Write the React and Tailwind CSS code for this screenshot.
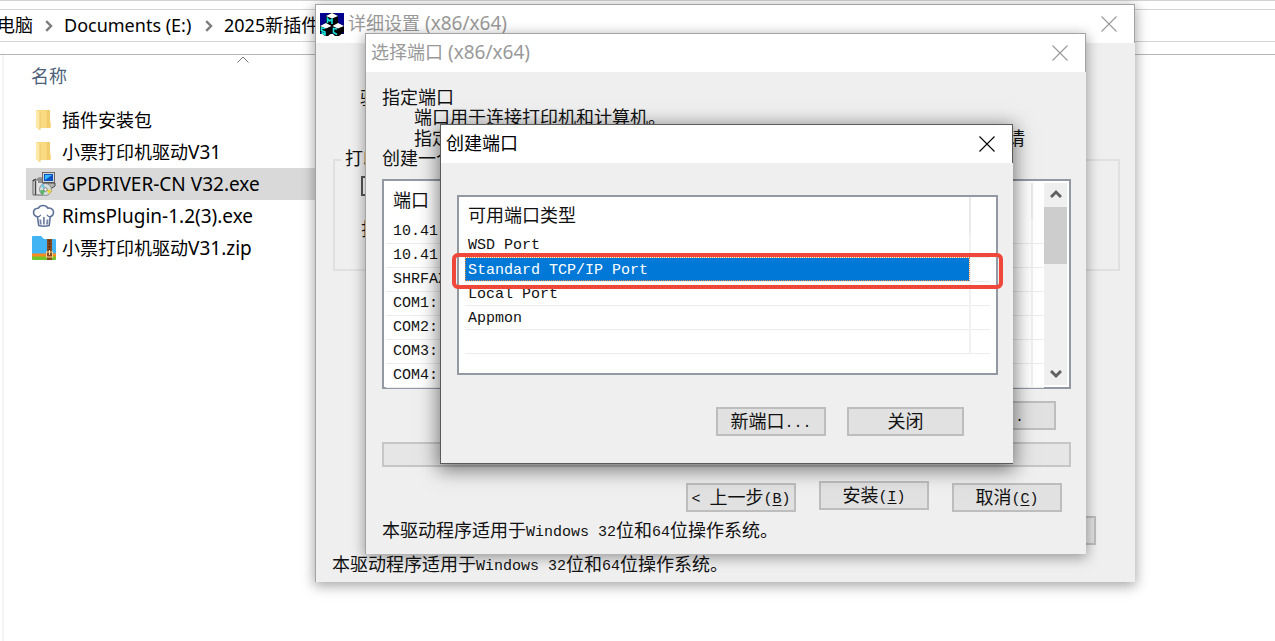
import React from "react";

const ui = "font-['Open_Sans','Noto_Sans_CJK_SC',sans-serif]";
const song = "font-['Liberation_Mono','Noto_Sans_CJK_SC',monospace]";

/* Dialog text: full-width glyphs at 18px, Latin runs on a 9px grid. */
function Song({ children }) {
  return String(children)
    .split(/([ -~]+)/)
    .filter(Boolean)
    .map((part, i) =>
      /^[ -~]+$/.test(part) ? (
        <span key={i} className="text-[15px] leading-4 align-[1px] whitespace-pre">{part}</span>
      ) : (
        <span key={i}>{part}</span>
      )
    );
}

/* Explorer and title text: Latin runs get their own face and size. */
function Label({ large, children }) {
  return String(children)
    .split(/([ -~]+)/)
    .filter(Boolean)
    .map((part, i) =>
      /^[ -~]+$/.test(part) ? (
        <span key={i} className={`${large ? "text-[19px]" : "text-[18px]"} leading-6 font-['Noto_Sans',sans-serif] whitespace-pre`}>{part}</span>
      ) : (
        <span key={i}>{part}</span>
      )
    );
}

function Chevron() {
  return (
    <svg width="8" height="12" viewBox="0 0 8 12" fill="none" stroke="#7c7c7c" strokeWidth="2.4" aria-hidden="true">
      <path d="M1.2 1.2 6 6 1.2 10.8" />
    </svg>
  );
}

function FolderIcon() {
  return (
    <svg width="24" height="24" viewBox="0 0 24 24" aria-hidden="true">
      <path d="M4 2h14v12h.5v6H8L4 16z" fill="#f9da80" />
      <path d="M14.500 2H18v12h.5v6h-4z" fill="#f3cd6c" />
      <path d="M4 2l4 2v18.500l-4-3z" fill="#ffe9a6" />
      <path d="M8 4v18" stroke="#ecc96c" strokeWidth="1" />
    </svg>
  );
}

function InstallerIcon() {
  return (
    <svg width="24" height="24" viewBox="0 0 24 24" aria-hidden="true">
      <path d="M1 8h5V6h5v17H1z" fill="#e4e4e4" stroke="#666" />
      <path d="M3.500 9v14M1 9l3-2" stroke="#444" strokeWidth="1.400" />
      <path d="M6 6h5v5H6z" fill="#8f8f8f" />
      <rect x="10.500" y=".5" width="12" height="10" fill="#d5d8da" stroke="#666" />
      <rect x="12" y="2" width="9" height="7" fill="#0b51c5" />
      <path d="M13 3h7l-7 5z" fill="#35baff" />
      <path d="M12 11h11v3l-3 2h-8z" fill="#b3b5b5" stroke="#444" />
      <circle cx="13.500" cy="17.500" r="6" fill="#d5ddd9" stroke="#777" strokeWidth=".8" />
      <path d="M13.500 17.500 8.500 14a6 6 0 0 1 3-2z" fill="#6fc5e5" />
      <path d="m13.500 17.500 4 4.500a6 6 0 0 0 2-4z" fill="#e8d53d" />
      <path d="m13.500 17.500-5.500 1a6 6 0 0 0 3 4.500z" fill="#55b76a" />
      <circle cx="13.500" cy="17.500" r="1.700" fill="#fff" stroke="#555" strokeWidth=".7" />
    </svg>
  );
}

function ChefIcon() {
  return (
    <svg width="24" height="24" viewBox="0 0 24 24" fill="#fff" stroke="#5d7098" strokeWidth="1.600" strokeLinejoin="round" aria-hidden="true">
      <path d="M5.500 12.800A4.300 4.300 0 1 1 6.200 4.200 5.800 5.800 0 0 1 16 4.200a4.300 4.300 0 1 1 2.200 8.600L17.200 21.500q-5.600 1.500-10.500 0z" />
      <path d="m8.800 20.500-.5-5M11.900 20.500V13M15 20.500l.5-5" stroke="#7786a8" strokeWidth="1.800" />
      <path d="M5.600 12.800q2.400-.2 3.200-2M18.200 12.800q-2.400-.2-3.200-2" fill="none" strokeWidth="1.200" />
    </svg>
  );
}

function ZipIcon() {
  return (
    <svg width="24" height="24" viewBox="0 0 24 24" aria-hidden="true">
      <path d="M0 1q0-1 1-1h8l3 3h11q1 0 1 1v14H0z" fill="#43b4f3" />
      <path d="M0 17.500h24V21H0z" fill="#fb8b1e" />
      <path d="M0 20.500h24V23q0 1-1 1H1q-1 0-1-1z" fill="#71c52c" />
      <path d="M15 3h5v21h-5z" fill="#8a4a20" />
      <path d="M17.500 4v11" stroke="#4b2814" strokeWidth="1.600" strokeDasharray="1.500 1.500" />
      <rect x="14.500" y="16" width="6" height="5" fill="#8a4a20" stroke="#ffd38a" />
      <path d="M17.500 14v5" stroke="#ffe2a8" />
    </svg>
  );
}

/* Three lettered cubes stacked on a navy field. */
function MfcIcon() {
  return (
    <svg width="24" height="23" viewBox="0 0 24 23" aria-hidden="true">
      <path d="M0 0h24v21H0z" fill="#00008c" />
      <path d="M6 3v7l-6 3v6l5 4h3l4-3 3 3h4l5-4v-6l-6-3V3l-5-3h-2z" fill="#000" />
      <path d="m6 3 6-3 6 3-6 2.500zM0 13l6-3 5.500 3L6 15.500zM12.500 13l5.500-3 6 3-6 2.500z" fill="#fff" />
      <path d="M7.500 10V5.500l2 2.500L12 6.500V11M5 15.500l-3.500-.5v2.500L5 19v2.500l-3.500-2M17 16l-3.500-.5v4l3.500 2" stroke="#17e3df" strokeWidth="1.600" fill="none" />
    </svg>
  );
}

function Win({ title, icon, active, place, children }) {
  return (
    <section
      aria-label={title}
      className={`absolute flex flex-col border-t border-l bg-[#efefef] ${
        active
          ? "border-[#5a5a5a] border-b shadow-[0_4px_18px_2px_rgba(0,0,0,0.5)]"
          : "border-[#a3a3a3] shadow-[0_3px_12px_1px_rgba(0,0,0,0.35)]"
      } ${place}`}
    >
      <header
        className={`flex h-[38px] shrink-0 items-center gap-1 border-r bg-white pr-4 text-[18px] ${icon ? "pl-1" : "pl-[5px]"} ${ui} ${
          active ? "border-[#5a5a5a] text-black" : "border-[#a3a3a3] text-[#999]"
        }`}
      >
        {icon}
        <h2 className="flex-1 pb-0.5 leading-6 whitespace-nowrap"><Label large>{title}</Label></h2>
        <button type="button" aria-label={`关闭 ${title}`} className="p-px">
          <svg width="16" height="16" viewBox="0 0 16 16" stroke="currentColor" strokeWidth="1.100" aria-hidden="true">
            <path d="m.5.5 15 15m0-15-15 15" />
          </svg>
        </button>
      </header>
      <div className={`flex min-h-0 flex-1 flex-col text-[18px] leading-5 text-[#111] ${song}`}>{children}</div>
    </section>
  );
}

function Btn({ className = "", children }) {
  return (
    <button
      type="button"
      className={`flex h-[29px] shrink-0 items-center justify-center whitespace-pre border-2 border-[#bdbdbd] bg-[#e1e1e1] pt-0.5 ${className}`}
    >
      {children}
    </button>
  );
}

function Key({ text, k }) {
  return (
    <span>
      <Song>{text}</Song>
      <span className="text-[15px] leading-4 align-[1px]">(<u className="underline-offset-2">{k}</u>)</span>
    </span>
  );
}

const files = [
  { name: "插件安装包", Icon: FolderIcon },
  { name: "小票打印机驱动V31", Icon: FolderIcon },
  { name: "GPDRIVER-CN V32.exe", Icon: InstallerIcon, selected: true },
  { name: "RimsPlugin-1.2(3).exe", Icon: ChefIcon },
  { name: "小票打印机驱动V31.zip", Icon: ZipIcon },
];

const ports = ["10.41.", "10.41.", "SHRFAX:", "COM1:", "COM2:", "COM3:", "COM4:"];
const portTypes = ["WSD Port", "Standard TCP/IP Port", "Local Port", "Appmon", ""];
const footer = "本驱动程序适用于Windows 32位和64位操作系统。";

export default function App() {
  return (
    <div className="relative min-h-screen overflow-hidden bg-white text-black">
      <main className={`flex min-h-screen flex-col text-[18px] ${ui}`}>
        <div className="h-2.5 border-t border-b border-[#d3d3d3]" />
        <nav aria-label="路径" className="flex h-8 items-center border-b border-[#d3d3d3] whitespace-nowrap">
          <a href="#pc" className="flex w-[33px] justify-end overflow-hidden"><span className="shrink-0">此电脑</span></a>
          <span className="flex w-[31px] justify-center"><Chevron /></span>
          <a href="#documents" className="w-[129px]"><Label>Documents (E:)</Label></a>
          <span className="flex w-[31px] justify-center"><Chevron /></span>
          <a href="#plugins"><Label>2025新插件</Label></a>
        </nav>
        <div className="h-[13px] border-b border-[#b5b5b5]" />
        <div className="ml-0.5 flex-1 border-l-2 border-[#f4f4f4]">
          <div className="flex h-[49px] items-start pl-[27px] text-[#4c607a]">
            <span className="w-[206px] pt-2">名称</span>
            <svg width="12" height="7" viewBox="0 0 12 7" fill="none" stroke="#777" className="mt-px" aria-hidden="true">
              <path d="M.5 6.500 6 1l5.500 5.500" />
            </svg>
          </div>
          <ul className="pl-[22px]">
            {files.map(({ name, Icon, selected }) => (
              <li key={name} className={`flex h-8 w-[320px] items-center gap-1.5 pl-1.5 whitespace-nowrap ${selected ? "bg-[#d9d9d9]" : ""}`}>
                <Icon />
                <span className="leading-6"><Label large>{name}</Label></span>
              </li>
            ))}
          </ul>
        </div>
      </main>

      <Win title="详细设置 (x86/x64)" icon={<MfcIcon />} place="left-[315px] top-[4px] h-[578px] w-[820px]">
        <p className="mt-[47px] pl-11">驱动程序</p>
        <fieldset className="mt-10 mr-[15px] ml-[17px] h-[121px] border-2 border-[#e0e0e0] pl-[26px]">
          <legend className="-ml-5 px-1">打印机</legend>
          <input type="checkbox" defaultChecked aria-label="打印机" className="mt-1.5 block size-5 appearance-none border-2 border-[#555] bg-white" />
          <p className="mt-[25px]">打印机</p>
        </fieldset>
        <div className="mt-auto flex justify-end pr-[39px]">
          <Btn className="w-[110px]">关闭</Btn>
        </div>
        <p className="mt-[11px] mb-1.5 pl-4"><Song>{footer}</Song></p>
      </Win>

      <Win title="选择端口 (x86/x64)" place="left-[365px] top-[33px] h-[521px] w-[721px]">
        <div className="flex flex-1 flex-col pt-[17px] pr-[15px] pl-4">
          <p>指定端口</p>
          <p className="pl-8">端口用于连接打印机和计算机。</p>
          <p className="flex w-[643px] justify-between pt-px pl-8"><span>指定</span><span>请</span></p>
          <p>创建一个</p>
          <div className="mt-[9px] flex h-[210px] border-2 border-[#9299a3] bg-white p-0.5">
            <table className="flex-1 self-start border-collapse">
              <thead>
                <tr className="h-9">
                  <th className="border-r-2 border-[#e9e9e9] pt-0.5 pl-[7px] text-left font-normal">端口</th>
                  <th className="w-3" />
                </tr>
              </thead>
              <tbody>
                {ports.map((p, i) => (
                  <tr key={i} className="h-6 border-b border-[#ececec]">
                    <td className="border-r-2 border-[#f1f1f1] pl-[7px]"><Song>{p}</Song></td>
                    <td />
                  </tr>
                ))}
              </tbody>
            </table>
            <div className="flex w-[23px] flex-col items-center bg-[#efefef] pt-1.5 pb-1.5">
              <svg width="12" height="10" viewBox="0 0 12 10" fill="none" stroke="#606060" strokeWidth="3" aria-hidden="true"><path d="m1 8 5-5 5 5" /></svg>
              <div className="mt-2 h-[57px] w-full bg-[#cdcdcd]" />
              <svg width="12" height="10" viewBox="0 0 12 10" fill="none" stroke="#606060" strokeWidth="3" className="mt-auto" aria-hidden="true"><path d="m1 2 5 5 5-5" /></svg>
            </div>
          </div>
          <Btn className="mt-3 mr-[15px] w-[145px] self-end"><span><Song>新端口...</Song></span></Btn>
          <div className="mt-3 h-[25px] border-2 border-[#c6c6c6] bg-[#e6e6e6]" />
          <div className="mt-4 flex justify-end gap-[23px] pr-[9px]">
            <Btn className="w-[110px]"><Key text="< 上一步" k="B" /></Btn>
            <Btn className="-mt-0.5 w-[110px]"><Key text="安装" k="I" /></Btn>
            <Btn className="w-[110px]"><Key text="取消" k="C" /></Btn>
          </div>
          <p className="mt-2.5"><Song>{footer}</Song></p>
        </div>
      </Win>

      <Win title="创建端口" active place="left-[440px] top-[124px] h-[340px] w-[573px]">
        <div className="flex flex-1 flex-col pt-8 pr-[15px] pl-4">
          <div className="relative h-[180px] border-2 border-[#9299a3] bg-white px-1.5">
            <table className="w-full border-collapse">
              <thead>
                <tr className="h-9">
                  <th className="border-r-2 border-[#e9e9e9] pt-1 pl-[3px] text-left font-normal">可用端口类型</th>
                  <th className="w-5" />
                </tr>
              </thead>
              <tbody>
                {portTypes.map((p, i) => (
                  <tr key={i} className="h-6 border-b border-[#ececec]">
                    <td className={`border-r-2 border-[#f1f1f1] pt-px pl-[3px] ${i === 1 ? "bg-[#0078d7] text-white outline-1 -outline-offset-1 outline-dotted outline-[#e08a3c]" : ""}`}>
                      <Song>{p}</Song>
                    </td>
                    <td />
                  </tr>
                ))}
              </tbody>
            </table>
            <div className="absolute -inset-x-[7px] top-14 h-9 rounded-md border-4 border-[#ef473a]" />
          </div>
          <div className="mt-8 flex justify-end gap-[21px] pr-[34px]">
            <Btn className="w-[110px]"><span><Song>新端口...</Song></span></Btn>
            <Btn className="w-[117px]">关闭</Btn>
          </div>
        </div>
      </Win>
    </div>
  );
}
